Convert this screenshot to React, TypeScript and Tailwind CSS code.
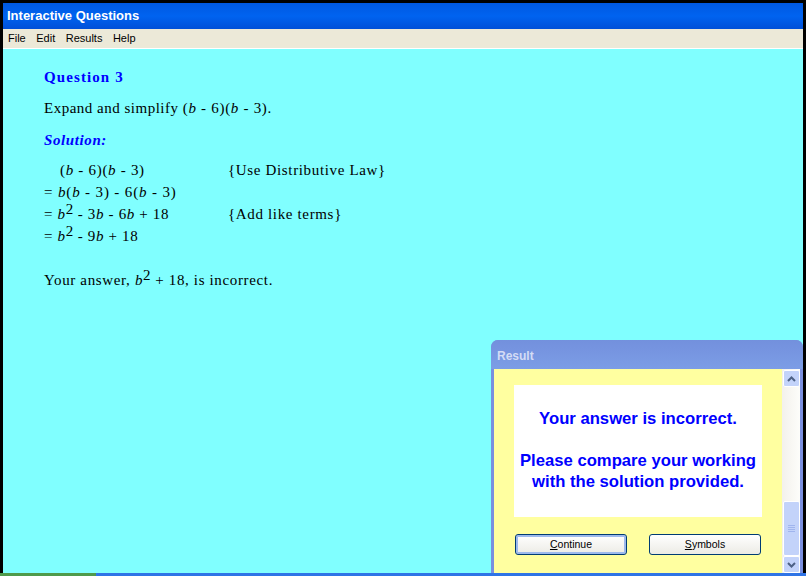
import React from 'react'

const V = ({ children }: { children: React.ReactNode }) => <i>{children}</i>
const Sq = () => <span className="text-[15px] leading-[0] align-[5px] mr-[4px]">2</span>

function ScrollArrow({ up }: { up?: boolean }) {
    return (
        <div className="h-[17px] w-[17px] shrink-0 rounded-[2px] border border-white bg-[#c3d3fa] flex items-center justify-center">
            <svg width="9" height="6" viewBox="0 0 9 6">
                <path d={up ? 'M1 5L4.5 1.5L8 5' : 'M1 1L4.5 4.5L8 1'} fill="none" stroke="#4d6185" strokeWidth="2" />
            </svg>
        </div>
    )
}

function DlgButton({ first, rest, focused }: { first: string; rest: string; focused?: boolean }) {
    return (
        <button
            className={`w-[112px] h-[21px] rounded-[3px] border border-[#003c74] bg-gradient-to-b from-white to-[#ecebe5] text-[10.5px] leading-none text-black font-['Liberation_Sans',sans-serif] ${focused ? 'shadow-[inset_0_0_0_2px_#9db9ec]' : ''}`}
        >
            <span className="underline">{first}</span>
            {rest}
        </button>
    )
}

function ResultDialog() {
    return (
        <div className="absolute right-0 bottom-0 w-[312px] h-[233px] flex flex-col rounded-t-[7px] bg-[#7a8fdf] overflow-hidden tracking-normal">
            <div className="h-[29px] shrink-0 bg-gradient-to-b from-[#7390dd] to-[#7c9de6] pl-[6px] pt-[3px] flex items-center text-[12px] font-bold text-[#d4dcf5] font-['Liberation_Sans',sans-serif]">
                Result
            </div>
            <div className="flex flex-1 min-h-0 pl-[3px] pr-[3px]">
                <div className="w-[288px] bg-[#ffffa0] px-[20px] pt-[16px]">
                    <div className="w-[248px] h-[132px] bg-white flex flex-col items-center text-center pt-[23px] text-[16.67px] leading-[21px] font-bold text-[#0000ff] font-['Liberation_Sans',sans-serif]">
                        <div>Your answer is incorrect.</div>
                        <div className="mt-[21px]">Please compare your working</div>
                        <div>with the solution provided.</div>
                    </div>
                    <div className="flex justify-between mt-[17px] pl-[1px] pr-[1px]">
                        <DlgButton first="C" rest="ontinue" focused />
                        <DlgButton first="S" rest="ymbols" />
                    </div>
                </div>
                <div className="w-[18px] flex flex-col items-center bg-gradient-to-r from-[#f3f1ec] to-[#fdfdfa] pt-[1px]">
                    <ScrollArrow up />
                    <div className="flex-1" />
                    <div className="h-[55px] w-[17px] rounded-[2px] border border-white bg-[#c3d3fa] flex flex-col items-center justify-center gap-[1px]">
                        <div className="w-[7px] h-px bg-[#a0b5ee]" />
                        <div className="w-[7px] h-px bg-[#a0b5ee]" />
                        <div className="w-[7px] h-px bg-[#a0b5ee]" />
                        <div className="w-[7px] h-px bg-[#a0b5ee]" />
                    </div>
                    <ScrollArrow />
                </div>
            </div>
        </div>
    )
}

export default function App() {
    return (
        <div className="relative w-[806px] h-[576px] overflow-hidden bg-black pt-[3px] px-[3px] flex flex-col">
            <div className="h-[26px] shrink-0 bg-gradient-to-b from-[#0058e0] via-[#0063f0] to-[#0050d8] pl-[4px] flex items-center text-[13px] font-bold text-white font-['Liberation_Sans',sans-serif]">
                Interactive Questions
            </div>
            <div className="h-[19px] shrink-0 bg-[#ece9d8] flex items-center gap-[10.5px] pl-[5px] text-[11px] text-black font-['Liberation_Sans',sans-serif]">
                <span>File</span>
                <span>Edit</span>
                <span>Results</span>
                <span>Help</span>
            </div>
            <div className="h-px shrink-0 bg-white" />

            <div className="relative flex-1 bg-[#80ffff] pl-[41px] pt-[20px] font-['Liberation_Serif',serif] text-[15px] tracking-[0.65px] text-black">
                <div className="font-bold text-[#0000ff] leading-[17px] tracking-[1.1px]">Question 3</div>
                <div className="mt-[13px] leading-[18px] tracking-[0.5px]">
                    Expand and simplify <span className="tracking-[0.7px]">(<V>b</V> - 6)(<V>b</V> - 3).</span>
                </div>
                <div className="mt-[14px] italic font-bold text-[15px] tracking-[0.6px] text-[#0000ff] leading-[18px]">Solution:</div>

                <div className="mt-[10px] grid grid-cols-[184px_auto] justify-start auto-rows-[22px] items-center leading-[22px]">
                    <div className="pl-[16px] tracking-[0.7px]">(<V>b</V> - 6)(<V>b</V> - 3)</div>
                    <div>{'{'}Use Distributive Law{'}'}</div>
                    <div className="tracking-[0.85px]">= <V>b</V>(<V>b</V> - 3) - 6(<V>b</V> - 3)</div>
                    <div />
                    <div>= <V>b</V><Sq />- 3<V>b</V> - 6<V>b</V> + 18</div>
                    <div>{'{'}Add like terms{'}'}</div>
                    <div>= <V>b</V><Sq />- 9<V>b</V> + 18</div>
                    <div />
                </div>

                <div className="mt-[22px] leading-[22px]">
                    Your answer, <V>b</V><Sq />+ 18, is incorrect.
                </div>

                <ResultDialog />
            </div>

            <div className="h-[3px] shrink-0 -mx-[3px] flex">
                <div className="w-[96px] bg-[#4f9a4b]" />
                <div className="flex-1 bg-[#2f74e6]" />
            </div>
        </div>
    )
}
